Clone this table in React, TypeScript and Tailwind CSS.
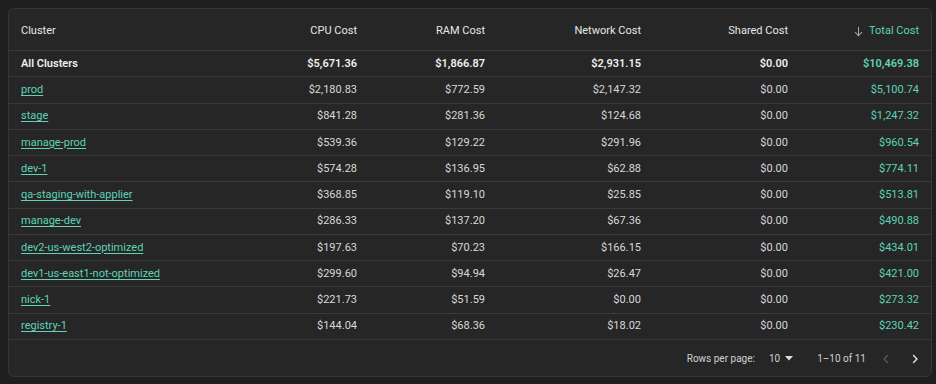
import React from "react";

type Row = {
  name: string;
  cpu: string;
  ram: string;
  network: string;
  shared: string;
  total: string;
};

const rows: Row[] = [
  { name: "prod", cpu: "$2,180.83", ram: "$772.59", network: "$2,147.32", shared: "$0.00", total: "$5,100.74" },
  { name: "stage", cpu: "$841.28", ram: "$281.36", network: "$124.68", shared: "$0.00", total: "$1,247.32" },
  { name: "manage-prod", cpu: "$539.36", ram: "$129.22", network: "$291.96", shared: "$0.00", total: "$960.54" },
  { name: "dev-1", cpu: "$574.28", ram: "$136.95", network: "$62.88", shared: "$0.00", total: "$774.11" },
  { name: "qa-staging-with-applier", cpu: "$368.85", ram: "$119.10", network: "$25.85", shared: "$0.00", total: "$513.81" },
  { name: "manage-dev", cpu: "$286.33", ram: "$137.20", network: "$67.36", shared: "$0.00", total: "$490.88" },
  { name: "dev2-us-west2-optimized", cpu: "$197.63", ram: "$70.23", network: "$166.15", shared: "$0.00", total: "$434.01" },
  { name: "dev1-us-east1-not-optimized", cpu: "$299.60", ram: "$94.94", network: "$26.47", shared: "$0.00", total: "$421.00" },
  { name: "nick-1", cpu: "$221.73", ram: "$51.59", network: "$0.00", shared: "$0.00", total: "$273.32" },
  { name: "registry-1", cpu: "$144.04", ram: "$68.36", network: "$18.02", shared: "$0.00", total: "$230.42" },
];

// column template shared by header, totals and rows
const grid = "grid grid-cols-[1fr_113px_128px_156px_147px_131px] items-center pl-3 pr-3";

const App = () => {
  return (
    <div className="w-[936px] h-[384px] bg-[#1f1f1f] pt-2 pl-2 font-['Roboto',sans-serif] text-[11px] text-[#d8d8d8]">
      <div className="w-[924px] h-[369px] rounded-md border border-[#363636] bg-[#262626] flex flex-col overflow-hidden">
        <div className={`${grid} h-[42px] pt-1 border-b border-[#3a3a3a] text-[#e6e6e6]`}>
          <div>Cluster</div>
          <div className="text-right">CPU Cost</div>
          <div className="text-right">RAM Cost</div>
          <div className="text-right">Network Cost</div>
          <div className="text-right">Shared Cost</div>
          <div className="flex items-center justify-end gap-[5px] text-[#5ed3b6]">
            <svg width="11" height="11" viewBox="0 0 24 24" fill="none" stroke="#a8a8a8" strokeWidth="2.2" strokeLinecap="round" strokeLinejoin="round">
              <path d="M12 3v18" />
              <path d="M5 14l7 7 7-7" />
            </svg>
            Total Cost
          </div>
        </div>
        <div className={`${grid} h-[26.25px] pt-[2px] border-b border-[#3a3a3a] font-semibold text-[#f0f0f0]`}>
          <div>All Clusters</div>
          <div className="text-right">$5,671.36</div>
          <div className="text-right">$1,866.87</div>
          <div className="text-right">$2,931.15</div>
          <div className="text-right">$0.00</div>
          <div className="text-right text-[#5ed3b6]">$10,469.38</div>
        </div>
        {rows.map((r) => (
          <div key={r.name} className={`${grid} h-[26.25px] pt-[1px] border-b border-[#3a3a3a]`}>
            <div>
              <span className="text-[#5ed3b6] underline underline-offset-2">{r.name}</span>
            </div>
            <div className="text-right">{r.cpu}</div>
            <div className="text-right">{r.ram}</div>
            <div className="text-right">{r.network}</div>
            <div className="text-right">{r.shared}</div>
            <div className="text-right text-[#5ed3b6]">{r.total}</div>
          </div>
        ))}
        <div className="flex-1 flex items-center justify-end pr-[10px] pt-[2px] text-[10px] text-[#d0d0d0]">
          <span>Rows per page:</span>
          <span className="ml-[14px]">10</span>
          <svg className="ml-[5px]" width="8" height="5" viewBox="0 0 8 5">
            <path d="M0 0h8L4 4.5z" fill="#e0e0e0" />
          </svg>
          <span className="ml-[24px]">1–10 of 11</span>
          <div className="ml-[14px] flex items-center gap-[17px]">
            <svg width="12" height="12" viewBox="0 0 24 24" fill="none" stroke="#5a5a5a" strokeWidth="2.4" strokeLinecap="round" strokeLinejoin="round">
              <path d="M15 5l-7 7 7 7" />
            </svg>
            <svg width="12" height="12" viewBox="0 0 24 24" fill="none" stroke="#eeeeee" strokeWidth="2.6" strokeLinecap="round" strokeLinejoin="round">
              <path d="M9 5l7 7-7 7" />
            </svg>
          </div>
        </div>
      </div>
    </div>
  );
};

export default App;
